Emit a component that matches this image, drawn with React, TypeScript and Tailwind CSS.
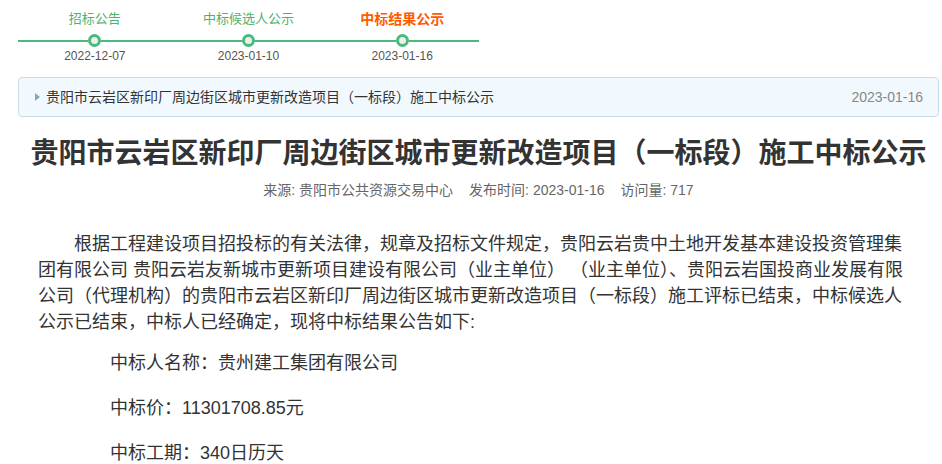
const font = { fontFamily: '"Liberation Sans", "Noto Sans CJK SC", sans-serif' };

const steps = [
  { label: '招标公告', date: '2022-12-07', active: false },
  { label: '中标候选人公示', date: '2023-01-10', active: false },
  { label: '中标结果公示', date: '2023-01-16', active: true },
];

const items = ['中标人名称：贵州建工集团有限公司', '中标价：11301708.85元', '中标工期：340日历天'];

export default function App() {
  return (
    <div className="bg-white w-[942px] h-[464px] overflow-hidden pl-[18px] pr-[3px]" style={font}>
      {/* Progress */}
      <div className="grid grid-cols-3 w-[461px] pt-[9px]">
        {steps.map((s) => (
          <div key={s.label} className="flex flex-col items-center">
            <span
              className={
                s.active
                  ? 'text-[14px] leading-[20px] font-bold text-[#ff5a00]'
                  : 'text-[13px] leading-[20px] text-[#4eb36f]'
              }
            >
              {s.label}
            </span>
            <div className="flex items-center w-full mt-[5px]">
              <div className="flex-1 h-[2px] bg-[#4cb97c]" />
              <div className="w-[13px] h-[13px] rounded-full border-[3px] border-[#4cb97c] bg-[#eeeeee]" />
              <div className="flex-1 h-[2px] bg-[#4cb97c]" />
            </div>
            <span className="mt-[1px] text-[12px] leading-[16px] text-[#555]">{s.date}</span>
          </div>
        ))}
      </div>

      {/* Current notice bar */}
      <div className="mt-[13px] h-[40px] flex items-center justify-between rounded-[4px] border border-[#c8dce9] bg-[#f2f9fe] pl-[16px] pr-[15px]">
        <div className="flex items-center gap-[6px]">
          <span className="w-0 h-0 border-y-[4px] border-y-transparent border-l-[5px] border-l-[#7fa8c6]" />
          <span className="text-[14px] text-[#333]">贵阳市云岩区新印厂周边街区城市更新改造项目（一标段）施工中标公示</span>
        </div>
        <span className="text-[14px] text-[#888]">2023-01-16</span>
      </div>

      {/* Article */}
      <h1 className="mt-[17px] text-center text-[28px] leading-[40px] font-bold text-[#333]">
        贵阳市云岩区新印厂周边街区城市更新改造项目（一标段）施工中标公示
      </h1>
      <div className="mt-[6px] text-center text-[14px] leading-[20px] text-[#666]">
        <span>来源: 贵阳市公共资源交易中心</span>
        <span className="ml-[16px]">发布时间: 2023-01-16</span>
        <span className="ml-[16px]">访问量: 717</span>
      </div>

      <div className="mt-[31px] pl-[20px] pr-[20px] text-[18px] text-[#333]">
        <p className="leading-[26px] indent-[2em]">
          根据工程建设项目招投标的有关法律，规章及招标文件规定，贵阳云岩贵中土地开发基本建设投资管理集团有限公司 贵阳云岩友新城市更新项目建设有限公司（业主单位） （业主单位）、贵阳云岩国投商业发展有限公司（代理机构）的贵阳市云岩区新印厂周边街区城市更新改造项目（一标段）施工评标已结束，中标候选人公示已结束，中标人已经确定，现将中标结果公告如下:
        </p>
        {items.map((t, i) => (
          <p key={t} className={(i === 0 ? 'mt-[15px]' : 'mt-[19px]') + ' leading-[26px] indent-[4em]'}>
            {t}
          </p>
        ))}
      </div>
    </div>
  );
}
